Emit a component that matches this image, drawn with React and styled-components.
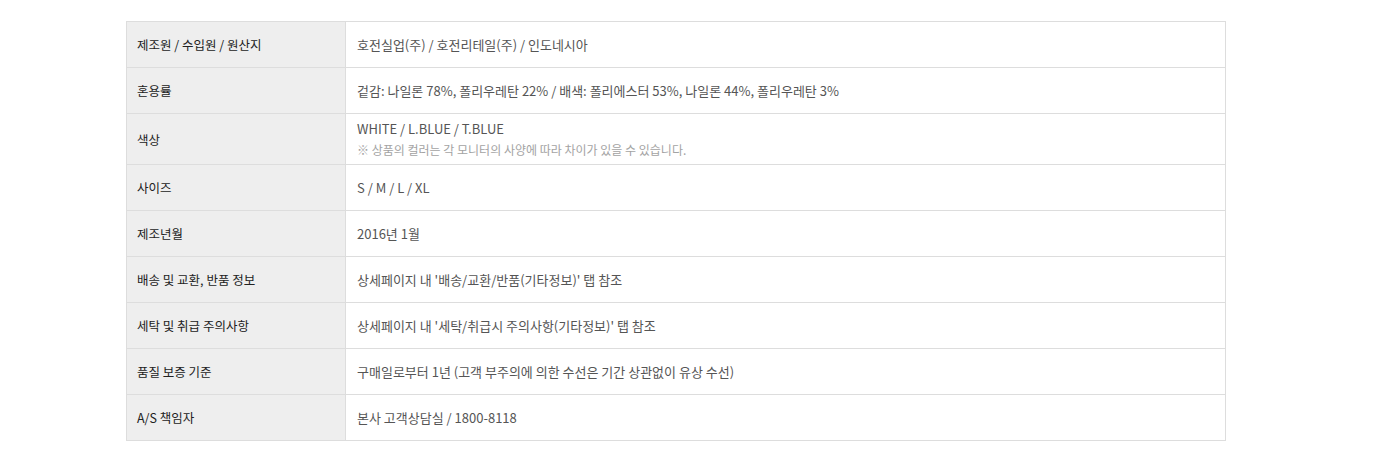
import React from "react"
import styled, { createGlobalStyle } from "styled-components"

const GlobalStyle = createGlobalStyle`
  body {
    margin: 0;
    background: #fff;
    font-family: "Noto Sans CJK KR", "Noto Sans", sans-serif;
  }
`

const rows = [
  { label: "제조원 / 수입원 / 원산지", value: "호전실업(주) / 호전리테일(주) / 인도네시아" },
  { label: "혼용률", value: "겉감: 나일론 78%, 폴리우레탄 22% / 배색: 폴리에스터 53%, 나일론 44%, 폴리우레탄 3%" },
  {
    label: "색상",
    value: "WHITE / L.BLUE / T.BLUE",
    note: "※ 상품의 컬러는 각 모니터의 사양에 따라 차이가 있을 수 있습니다."
  },
  { label: "사이즈", value: "S / M / L / XL" },
  { label: "제조년월", value: "2016년 1월" },
  { label: "배송 및 교환, 반품 정보", value: "상세페이지 내 '배송/교환/반품(기타정보)' 탭 참조" },
  { label: "세탁 및 취급 주의사항", value: "상세페이지 내 '세탁/취급시 주의사항(기타정보)' 탭 참조" },
  { label: "품질 보증 기준", value: "구매일로부터 1년 (고객 부주의에 의한 수선은 기간 상관없이 유상 수선)" },
  { label: "A/S 책임자", value: "본사 고객상담실 / 1800-8118" }
];

const Page = styled.div`
  padding: 21px 0 0 126px;
`

const Table = styled.table`
  width: 1100px;
  table-layout: fixed;
  border-collapse: collapse;
  font-size: 13px;
`

const Row = styled.tr`
  height: ${ p => p.tall ? 51 : 46 }px;
`

const Label = styled.th`
  width: 198px;
  padding: 0 10px;
  background: #eeeeee;
  border: 1px solid #dddddd;
  color: #222;
  font-size: 12.5px;
  font-weight: normal;
  text-align: left;
  vertical-align: middle;
`

const Value = styled.td`
  padding: 0 10px 0 11px;
  border: 1px solid #dddddd;
  color: #555;
  vertical-align: middle;
  line-height: 21px;
`

const Note = styled.div`
  color: #a3a3a3;
  font-size: 12px;
  line-height: 21px;
`

const App = () => (
  <Page>
    <GlobalStyle/>
    <Table>
      <tbody>
        { rows.map(r =>
            <Row key={ r.label } tall={ !!r.note }>
              <Label>{ r.label }</Label>
              <Value>
                { r.value }
                { r.note ? <Note>{ r.note }</Note> : null }
              </Value>
            </Row>
          )
        }
      </tbody>
    </Table>
  </Page>
)
export default App
